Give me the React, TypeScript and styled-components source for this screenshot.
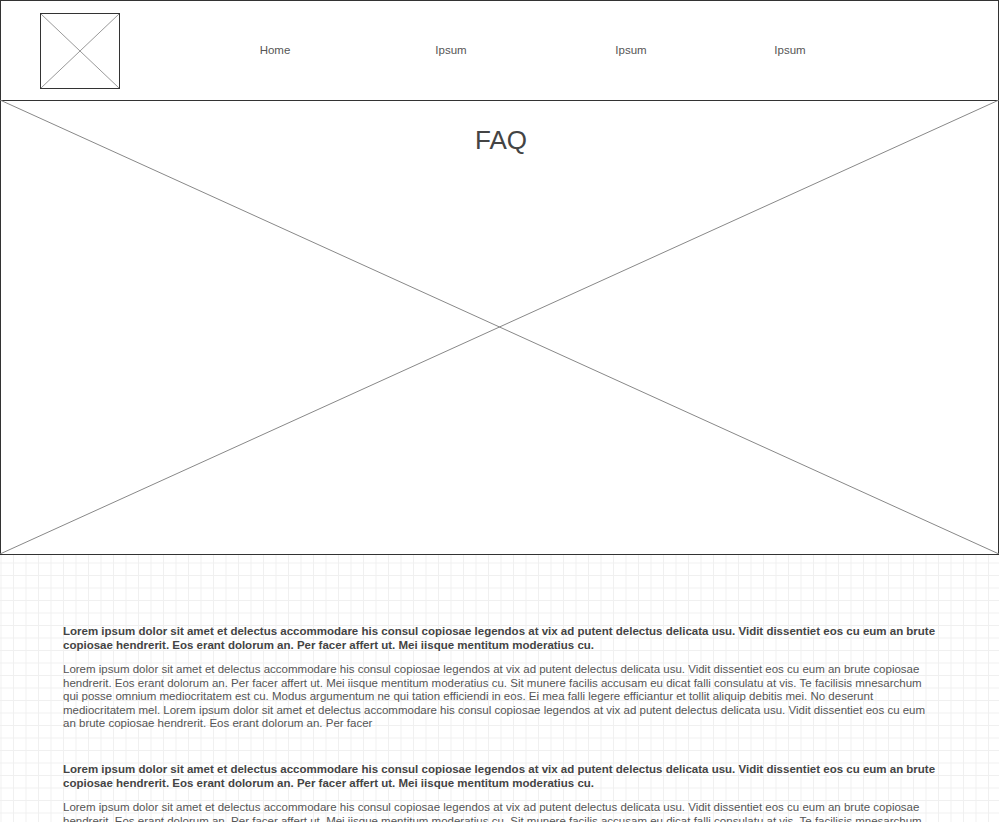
import styled, { createGlobalStyle } from 'styled-components';

const GlobalStyle = createGlobalStyle`
  html, body {
    margin: 0;
    padding: 0;
    background: #fff;
    font-family: "Liberation Sans", Arial, sans-serif;
  }
`;

const Page = styled.div`
  width: 999px;
`;

const Header = styled.header`
  box-sizing: border-box;
  height: 101px;
  border: 1px solid #333;
  display: flex;
  align-items: flex-start;
  padding: 12px 0 0 39px;
`;

const Logo = styled.div`
  box-sizing: border-box;
  width: 80px;
  height: 76px;
  border: 1px solid #333;

  svg {
    display: block;
    width: 100%;
    height: 100%;
  }
`;

const Nav = styled.nav`
  display: grid;
  grid-template-columns: 152px 200px 160px 158px;
  margin: 30px 0 0 79px;
`;

const NavLink = styled.a`
  text-align: center;
  font-size: 11.5px;
  line-height: 14px;
  color: #555;
  text-decoration: none;
  cursor: pointer;
`;

const Hero = styled.section`
  position: relative;
  box-sizing: border-box;
  height: 454px;
  border: 1px solid #333;
  border-top: none;
  padding: 24px 0 0 3px;
`;

const HeroLines = styled.svg`
  position: absolute;
  left: -1px;
  top: -1px;
  width: calc(100% + 2px);
  height: calc(100% + 1px);
`;

const Title = styled.h1`
  position: relative;
  margin: 0;
  text-align: center;
  font-size: 26px;
  line-height: 30px;
  font-weight: normal;
  color: #444;
`;

const GridArea = styled.main`
  min-height: 400px;
  padding: 70px 0 40px 63px;
  background-color: #fff;
  background-image:
    linear-gradient(to right, #f0f0f0 1px, transparent 1px),
    linear-gradient(to bottom, #f0f0f0 1px, transparent 1px);
  background-size: 12.5px 12.5px;
  background-position: 0.5px 7.5px;
`;

const Item = styled.article`
  width: 874px;
  margin-bottom: 32.5px;
`;

const Question = styled.p`
  margin: 0 0 11px;
  font-size: 11.5px;
  line-height: 13.5px;
  font-weight: bold;
  color: #444;
`;

const Answer = styled.p`
  margin: 0;
  font-size: 11.5px;
  line-height: 13.5px;
  color: #555;
`;

const question =
  'Lorem ipsum dolor sit amet et delectus accommodare his consul copiosae legendos at vix ad putent delectus delicata usu. Vidit dissentiet eos cu eum an brute copiosae hendrerit. Eos erant dolorum an. Per facer affert ut. Mei iisque mentitum moderatius cu.';

const answer =
  'Lorem ipsum dolor sit amet et delectus accommodare his consul copiosae legendos at vix ad putent delectus delicata usu. Vidit dissentiet eos cu eum an brute copiosae hendrerit. Eos erant dolorum an. Per facer affert ut. Mei iisque mentitum moderatius cu. Sit munere facilis accusam eu dicat falli consulatu at vis. Te facilisis mnesarchum qui posse omnium mediocritatem est cu. Modus argumentum ne qui tation efficiendi in eos. Ei mea falli legere efficiantur et tollit aliquip debitis mei. No deserunt mediocritatem mel. Lorem ipsum dolor sit amet et delectus accommodare his consul copiosae legendos at vix ad putent delectus delicata usu. Vidit dissentiet eos cu eum an brute copiosae hendrerit. Eos erant dolorum an. Per facer';

const faqs = [1, 2, 3];

export default function App() {
  return (
    <Page>
      <GlobalStyle />
      <Header>
        <Logo>
          <svg viewBox="0 0 100 100" preserveAspectRatio="none">
            <line x1="0" y1="0" x2="100" y2="100" stroke="#999" strokeWidth="1" vectorEffect="non-scaling-stroke" />
            <line x1="100" y1="0" x2="0" y2="100" stroke="#999" strokeWidth="1" vectorEffect="non-scaling-stroke" />
          </svg>
        </Logo>
        <Nav>
          <NavLink>Home</NavLink>
          <NavLink>Ipsum</NavLink>
          <NavLink>Ipsum</NavLink>
          <NavLink>Ipsum</NavLink>
        </Nav>
      </Header>
      <Hero>
        <HeroLines viewBox="0 0 100 100" preserveAspectRatio="none">
          <line x1="0" y1="0" x2="100" y2="100" stroke="#888" strokeWidth="1" vectorEffect="non-scaling-stroke" />
          <line x1="100" y1="0" x2="0" y2="100" stroke="#888" strokeWidth="1" vectorEffect="non-scaling-stroke" />
        </HeroLines>
        <Title>FAQ</Title>
      </Hero>
      <GridArea>
        {faqs.map((n) => (
          <Item key={n}>
            <Question>{question}</Question>
            <Answer>{answer}</Answer>
          </Item>
        ))}
      </GridArea>
    </Page>
  );
}
